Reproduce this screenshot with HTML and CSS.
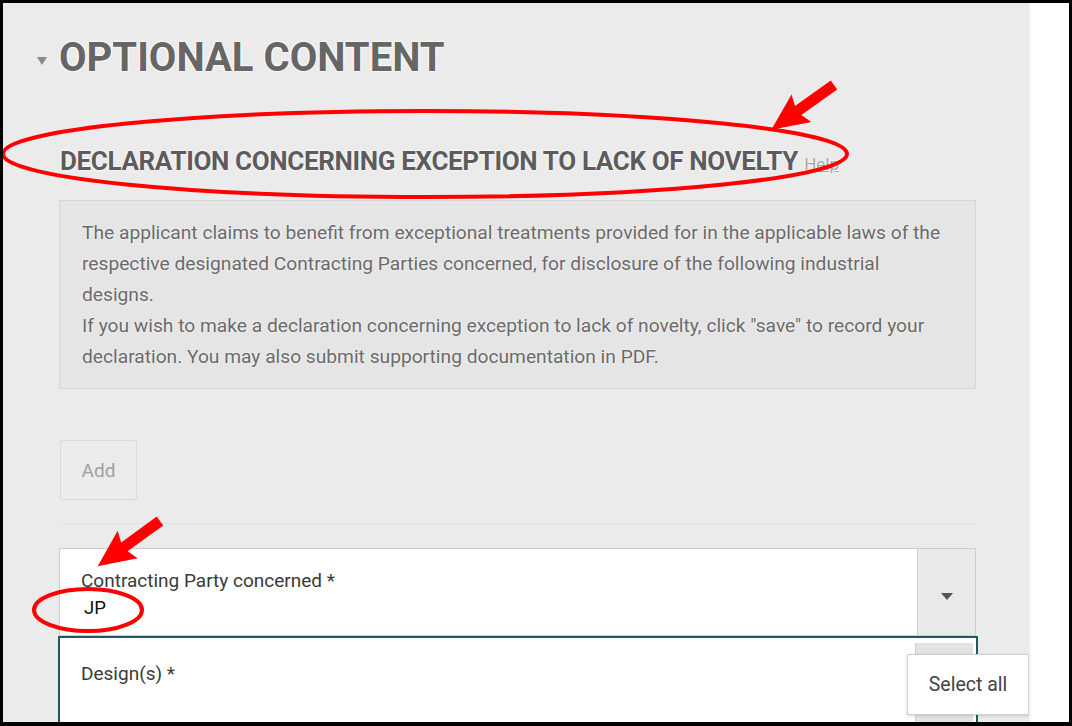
FILE: index.html
```html
<!DOCTYPE html>
<html lang="en">
<head>
  <meta charset="UTF-8" />
  <meta name="viewport" content="width=device-width, initial-scale=1.0"/>
  <title>Optional content</title>
  <link rel="stylesheet" href="styles.css">
</head>
<body>

<div class="frame">

  <!-- Panel s formulářem -->
  <div class="panel">

    <h1 class="section-title"><span class="caret"></span>OPTIONAL CONTENT</h1>

    <h2 class="block-title">DECLARATION CONCERNING EXCEPTION TO LACK OF NOVELTY <a class="help">Help</a></h2>

    <div class="info">
      <p>The applicant claims to benefit from exceptional treatments provided for in the applicable laws of the<br>
      respective designated Contracting Parties concerned, for disclosure of the following industrial<br>
      designs.</p>
      <p>If you wish to make a declaration concerning exception to lack of novelty, click "save" to record your<br>
      declaration. You may also submit supporting documentation in PDF.</p>
    </div>

    <button class="add-btn" type="button">Add</button>

    <div class="divider"></div>

    <div class="field">
      <div class="field-main">
        <div class="field-label">Contracting Party concerned *</div>
        <div class="field-value">JP</div>
      </div>
      <div class="field-btn"><span class="down"></span></div>
    </div>

    <div class="field field-active">
      <div class="field-main">
        <div class="field-label">Design(s) *</div>
      </div>
      <div class="field-btn field-btn-low"></div>
      <div class="menu">Select all</div>
    </div>

  </div>

  <!-- Červené značky přes obrázek -->
  <svg class="marks" width="1072" height="726" viewBox="0 0 1072 726">
    <ellipse cx="425" cy="154" rx="422" ry="43" fill="none" stroke="#ff0000" stroke-width="4"/>
    <ellipse cx="88" cy="610" rx="54" ry="21" fill="none" stroke="#ff0000" stroke-width="4"/>
    <polygon points="0,-5.5 44,-5.5 40,-17 77,0 40,17 44,5.5 0,5.5" fill="#ff0000" transform="translate(834,85) rotate(144.5)"/>
    <polygon points="0,-5.5 44,-5.5 40,-17 77,0 40,17 44,5.5 0,5.5" fill="#ff0000" transform="translate(160,521) rotate(144)"/>
  </svg>

</div>

</body>
</html>
```

FILE: styles.css
```css
body {
  margin: 0;
  font-family: Roboto, "Liberation Sans", sans-serif;
  background: #fff;
}
.frame {
  position: relative;
  width: 1072px;
  height: 726px;
  box-sizing: border-box;
  border: 3px solid #000;
  border-bottom-width: 4px;
  background: #fff;
  overflow: hidden;
}
.panel {
  width: 1028px;
  height: 100%;
  background: #ebebeb;
  border-right: 2px solid #f6f6f6;
  padding-left: 56px;
  box-sizing: border-box;
  overflow: hidden;
}
.section-title {
  display: flex;
  align-items: center;
  margin: 0 0 0 -22px;
  padding-top: 33px;
  font-size: 40px;
  line-height: 44px;
  font-weight: bold;
  letter-spacing: 0;
  color: #666;
  text-shadow: 0 0 2px #fff, 0 0 2px #fff, 0 0 3px #fff;
}
.caret {
  width: 0;
  height: 0;
  border-left: 5px solid transparent;
  border-right: 5px solid transparent;
  border-top: 8px solid #8a8a8a;
  margin-right: 12px;
  margin-top: 6px;
}
.block-title {
  margin: 66px 0 0 1px;
  font-size: 26px;
  line-height: 30px;
  font-weight: bold;
  letter-spacing: -0.35px;
  color: #5c5c5c;
  text-shadow: 0 0 2px #fff, 0 0 2px #fff;
  white-space: nowrap;
}
.help {
  font-size: 17px;
  font-weight: normal;
  letter-spacing: 0;
  color: #a5a5a5;
  text-decoration: underline;
}
.info {
  margin-top: 21px;
  width: 917px;
  box-sizing: border-box;
  padding: 16px 10px 16px 22px;
  background: #e5e5e5;
  border: 1px solid #d6d6d6;
  font-size: 19.2px;
  line-height: 31px;
  color: #6a6a6a;
  text-shadow: 0 0 2px #fff;
  white-space: nowrap;
}
.info p {
  margin: 0;
}
.add-btn {
  display: block;
  margin: 51px 0 0 1px;
  width: 77px;
  height: 60px;
  padding: 0;
  background: #ebebeb;
  border: 1px solid #d9d9d9;
  border-radius: 2px;
  font-family: inherit;
  font-size: 19px;
  color: #a0a0a0;
}
.divider {
  margin-top: 23px;
  width: 917px;
  border-top: 1px solid #e2e2e2;
}
.field {
  position: relative;
  display: flex;
  width: 917px;
  height: 88px;
  box-sizing: border-box;
  margin-top: 24px;
  background: #fff;
  border: 1px solid #cdcdcd;
}
.field-main {
  flex: 1;
  padding: 20px 0 0 21px;
}
.field-label {
  font-size: 19px;
  color: #3a3a3a;
}
.field-value {
  margin-top: 5px;
  padding-left: 3px;
  font-size: 18.5px;
  color: #111;
}
.field-btn {
  width: 57px;
  display: flex;
  align-items: center;
  justify-content: center;
  background: #e9e9e9;
  border-left: 1px solid #cdcdcd;
}
.down {
  width: 0;
  height: 0;
  margin-top: 8px;
  border-left: 6px solid transparent;
  border-right: 6px solid transparent;
  border-top: 7px solid #555;
}
.field-active {
  margin-top: 0;
  margin-left: -1px;
  width: 920px;
  height: 100px;
  border: 2px solid #1e5a66;
}
.field-active .field-main {
  padding: 24px 0 0 21px;
}
.field-btn-low {
  margin: 5px 3px 0 0;
  width: 57px;
  background: #e3e3e3;
  border-left: 1px solid #d0d0d0;
}
.menu {
  position: absolute;
  left: 847px;
  top: 16px;
  width: 122px;
  height: 61px;
  box-sizing: border-box;
  padding-top: 18px;
  text-align: center;
  background: #fff;
  border: 1px solid #cfcfcf;
  box-shadow: 0 1px 3px rgba(0,0,0,0.15);
  font-size: 19.5px;
  color: #444;
}
.marks {
  position: absolute;
  left: -3px;
  top: -3px;
  pointer-events: none;
}
```
